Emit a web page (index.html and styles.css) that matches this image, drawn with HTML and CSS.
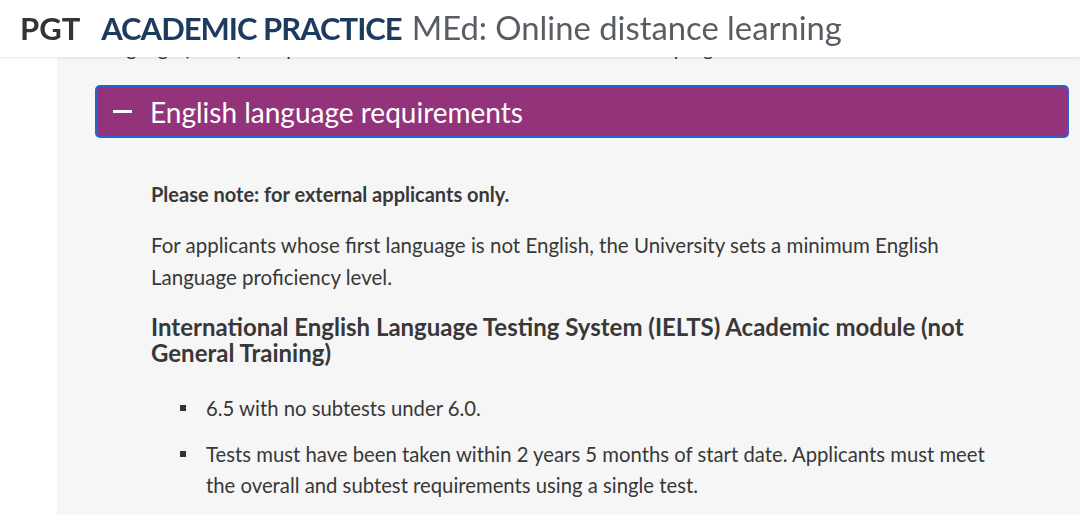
FILE: index.html
```html
<!DOCTYPE html>
<html lang="en">
<head>
<meta charset="utf-8">
<title>PGT Academic Practice MEd</title>
<link rel="stylesheet" href="styles.css">
</head>
<body>
<header class="topbar">
  <span class="tb-level">PGT</span>
  <span class="tb-subject">ACADEMIC PRACTICE</span>
  <span class="tb-course">MEd: Online distance learning</span>
</header>
<div class="page">
  <div class="gutter"></div>
  <main class="panel">
    <p class="cutoff">Language (IELTS) test pass marks are shown in the section for this programme.</p>
    <section class="accordion">
      <button class="acc-head" type="button">
        <span class="acc-icon"></span>
        <span class="acc-title">English language requirements</span>
      </button>
      <div class="acc-body">
        <p class="note">Please note: for external applicants only.</p>
        <p class="para">For applicants whose first language is not English, the University sets a minimum English Language proficiency level.</p>
        <h3 class="subhead">International English Language Testing System (IELTS) Academic module (not General Training)</h3>
        <ul class="reqs">
          <li>6.5 with no subtests under 6.0.</li>
          <li>Tests must have been taken within 2 years 5 months of start date. Applicants must meet the overall and subtest requirements using a single test.</li>
        </ul>
      </div>
    </section>
  </main>
</div>
</body>
</html>
```

FILE: styles.css
```css
html, body {
  margin: 0;
  padding: 0;
}
body {
  background: #ffffff;
  font-family: Lato, "Noto Sans", sans-serif;
  color: #383838;
  overflow: hidden;
}
.topbar {
  position: fixed;
  top: 0;
  left: 0;
  right: 0;
  height: 57px;
  background: #ffffff;
  box-shadow: 0 1px 3px rgba(0,0,0,0.10);
  display: flex;
  align-items: center;
  padding-left: 20px;
  padding-bottom: 2px;
  box-sizing: border-box;
  font-size: 31px;
  white-space: nowrap;
  z-index: 5;
}
.tb-level {
  font-weight: 700;
  color: #343434;
  margin-right: 21px;
}
.tb-subject {
  font-weight: 700;
  color: #1d3a5f;
  letter-spacing: -1px;
  margin-right: 10px;
}
.tb-course {
  color: #575d63;
  font-size: 32.8px;
}
.page {
  display: flex;
  min-height: 515px;
}
.gutter {
  width: 57px;
  flex: none;
  background: #ffffff;
}
.panel {
  flex: 1;
  background: #f6f6f6;
  padding: 0 11px 0 38px;
}
.cutoff {
  margin: 0 0 21px;
  padding: 32px 0 0 0;
  font-size: 20px;
  line-height: 32px;
  color: #383838;
  white-space: nowrap;
  overflow: hidden;
}
.acc-head {
  display: flex;
  align-items: center;
  width: 100%;
  height: 53px;
  box-sizing: border-box;
  background: #93337a;
  border: 2px solid #2e5fcf;
  border-radius: 5px;
  padding: 0 0 0 16px;
  margin: 0;
  font-family: inherit;
  cursor: pointer;
}
.acc-icon {
  width: 19px;
  height: 3px;
  background: #ffffff;
  margin-right: 18px;
}
.acc-title {
  color: #ffffff;
  font-size: 28px;
  font-weight: 400;
}
.acc-body {
  padding: 43px 66px 0 56px;
}
.note {
  margin: 0;
  font-size: 20px;
  font-weight: 700;
  line-height: 26px;
}
.para {
  margin: 22px 0 0;
  font-size: 20.5px;
  line-height: 32px;
}
.subhead {
  margin: 21px 0 0;
  font-size: 24px;
  font-weight: 700;
  line-height: 26px;
}
.reqs {
  list-style: none;
  margin: 27px 0 0;
  padding: 0 0 0 55px;
}
.reqs li {
  position: relative;
  font-size: 20.3px;
  line-height: 31px;
  margin-bottom: 15px;
}
.reqs li::before {
  content: "";
  position: absolute;
  left: -26px;
  top: 12px;
  width: 6px;
  height: 6px;
  background: #333333;
}
```
